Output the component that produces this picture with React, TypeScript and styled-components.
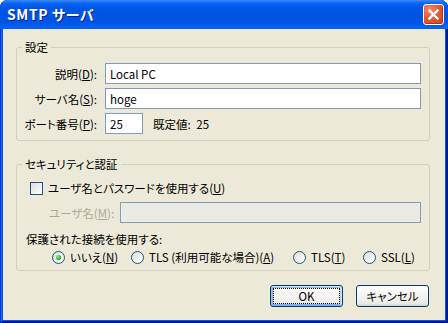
import React from "react";
import styled, { createGlobalStyle } from "styled-components";

const Global = createGlobalStyle`
  html, body { margin: 0; padding: 0; background: #ffffff; }
  body {
    font-family: "Noto Sans CJK JP", "Noto Sans", sans-serif;
    font-size: 11.5px;
    color: #000;
    font-feature-settings: "palt";
  }
  #root { width: 448px; height: 323px; }
`;

const Window = styled.div`
  width: 448px;
  height: 323px;
  display: flex;
  flex-direction: column;
  border-radius: 8px 8px 0 0;
  overflow: hidden;
  background: #0855dd;
  box-shadow: inset 1px 0 #0831d9, inset -1px 0 #00138c, inset 0 -1px #00138c,
    inset 2px 0 #166aee, inset -2px 0 #001ea0, inset 0 -2px #001ea0;
`;

const TitleBar = styled.div`
  height: 29px;
  flex: none;
  box-sizing: border-box;
  display: flex;
  align-items: center;
  justify-content: space-between;
  padding: 0 4px 1px 7px;
  background: linear-gradient(
    180deg,
    #3d8af5 0px,
    #1a72f8 2px,
    #0461f2 4px,
    #0056e6 8px,
    #0054e3 16px,
    #0055e6 22px,
    #005cf0 26px,
    #0a62f2 28px,
    #0858e6 29px
  );
`;

const Title = styled.span`
  color: #fff;
  font-weight: bold;
  font-size: 14px;
  letter-spacing: 0.6px;
  text-shadow: 1px 1px #0c1a8a;
  line-height: 16px;
`;

const CloseButton = styled.div`
  width: 21px;
  height: 21px;
  box-sizing: border-box;
  border: 1px solid #ffffff;
  border-radius: 3px;
  display: flex;
  align-items: center;
  justify-content: center;
  background: radial-gradient(circle at 30% 25%, #ef8a6c 0%, #e25b3a 45%, #c8431f 100%);
  box-shadow: inset -1px -1px #b2331a;
`;

const Body = styled.div`
  flex: 1;
  margin: 0 3px 3px;
  background: #ece9d8;
  padding: 18px 15px 0 13px;
  display: flex;
  flex-direction: column;
`;

const Group = styled.div<{ $gap?: number }>`
  border: 1px solid #d0d0bf;
  border-radius: 3px;
  padding: 0 8px 6px 0;
  margin-top: ${(p) => p.$gap ?? 0}px;
`;

const Legend = styled.div`
  margin: -8px 0 0 5px;
  padding: 0 3px;
  width: fit-content;
  height: 14px;
  line-height: 14px;
  background: #ece9d8;
`;

const FormGrid = styled.div`
  display: grid;
  grid-template-columns: 80px 1fr;
  column-gap: 8px;
  row-gap: 4px;
  margin-top: 9px;
  align-items: center;
`;

const FieldLabel = styled.label<{ $disabled?: boolean }>`
  text-align: right;
  white-space: nowrap;
  line-height: 14px;
  color: ${(p) => (p.$disabled ? "#aca899" : "#000")};
`;

const TextInput = styled.div<{ $disabled?: boolean; $width?: number }>`
  height: 21px;
  box-sizing: border-box;
  border: 1px solid #7f9db9;
  background: ${(p) => (p.$disabled ? "#ebebe4" : "#ffffff")};
  padding: 0 4px;
  display: flex;
  align-items: center;
  line-height: 14px;
  ${(p) => (p.$width ? `width: ${p.$width}px;` : "flex: 1;")}
`;

const PortRow = styled.div`
  display: flex;
  align-items: center;
`;

const DefaultNote = styled.span`
  margin-left: 10px;
  line-height: 14px;
  word-spacing: 3px;
`;

const CheckRow = styled.div`
  display: flex;
  align-items: center;
  gap: 5px;
  margin: 9px 0 0 13px;
  height: 16px;
  line-height: 14px;
`;

const CheckBox = styled.span`
  width: 13px;
  height: 13px;
  box-sizing: border-box;
  border: 1px solid #1c5180;
  background: linear-gradient(135deg, #dcdcd7, #ffffff);
  flex: none;
`;

const UserRow = styled.div`
  display: flex;
  align-items: center;
  margin: 6px 0 0 32px;
`;

const UserLabel = styled.span`
  width: 71px;
  flex: none;
  color: #aca899;
  line-height: 14px;
  white-space: nowrap;
`;

const PlainText = styled.div`
  margin: 9px 0 0 9px;
  line-height: 14px;
`;

const RadioGrid = styled.div`
  display: grid;
  grid-template-columns: 79px 162px 70px auto;
  margin: 4px 0 0 35px;
  height: 14px;
  align-items: center;
`;

const RadioItem = styled.div`
  display: flex;
  align-items: center;
  gap: 5px;
  white-space: nowrap;
  line-height: 14px;
`;

const RadioCircle = styled.span<{ $checked?: boolean }>`
  width: 13px;
  height: 13px;
  box-sizing: border-box;
  border-radius: 50%;
  border: 1px solid #1c5180;
  background: linear-gradient(135deg, #dcdcd7, #ffffff);
  flex: none;
  display: flex;
  align-items: center;
  justify-content: center;
  &::after {
    content: "";
    display: ${(p) => (p.$checked ? "block" : "none")};
    width: 5px;
    height: 5px;
    border-radius: 50%;
    background: radial-gradient(circle at 35% 35%, #8ff08f, #21a121 70%);
  }
`;

const ButtonRow = styled.div`
  display: flex;
  justify-content: flex-end;
  gap: 13px;
  margin: 14px 1px 0 0;
`;

const Button = styled.div<{ $default?: boolean }>`
  width: 73px;
  height: 22px;
  box-sizing: border-box;
  border: 1px solid #003c74;
  border-radius: 3px;
  background: linear-gradient(180deg, #ffffff, #ecebe6 86%, #d6d0c5);
  display: flex;
  align-items: center;
  justify-content: center;
  line-height: 14px;
  ${(p) =>
    p.$default
      ? `box-shadow: inset -1px 1px #cee7ff, inset 1px 2px #98b8ea, inset -2px 2px #bcd4f6, inset 1px -1px #89ade4, inset 2px -2px #89ade4;
         outline: 1px dotted #000; outline-offset: -4px;`
      : ""}
`;

export default function App() {
  return (
    <>
      <Global />
      <Window>
        <TitleBar>
          <Title>SMTP サーバ</Title>
          <CloseButton>
            <svg width="11" height="11" viewBox="0 0 11 11">
              <path d="M1.5 1.5 L9.5 9.5 M9.5 1.5 L1.5 9.5" stroke="#fff" strokeWidth="2.3" strokeLinecap="square" />
            </svg>
          </CloseButton>
        </TitleBar>
        <Body>
          <Group>
            <Legend>設定</Legend>
            <FormGrid>
              <FieldLabel>
                説明(<u>D</u>):
              </FieldLabel>
              <TextInput>Local PC</TextInput>
              <FieldLabel>
                サーバ名(<u>S</u>):
              </FieldLabel>
              <TextInput>hoge</TextInput>
              <FieldLabel>
                ポート番号(<u>P</u>):
              </FieldLabel>
              <PortRow>
                <TextInput $width={38}>25</TextInput>
                <DefaultNote>既定値: 25</DefaultNote>
              </PortRow>
            </FormGrid>
          </Group>
          <Group $gap={23}>
            <Legend>セキュリティと認証</Legend>
            <CheckRow>
              <CheckBox />
              <span>
                ユーザ名とパスワードを使用する(<u>U</u>)
              </span>
            </CheckRow>
            <UserRow>
              <UserLabel>
                ユーザ名(<u>M</u>):
              </UserLabel>
              <TextInput $disabled />
            </UserRow>
            <PlainText>保護された接続を使用する:</PlainText>
            <RadioGrid>
              <RadioItem>
                <RadioCircle $checked />
                <span>
                  いいえ(<u>N</u>)
                </span>
              </RadioItem>
              <RadioItem>
                <RadioCircle />
                <span>
                  TLS (利用可能な場合)(<u>A</u>)
                </span>
              </RadioItem>
              <RadioItem>
                <RadioCircle />
                <span>
                  TLS(<u>T</u>)
                </span>
              </RadioItem>
              <RadioItem>
                <RadioCircle />
                <span>
                  SSL(<u>L</u>)
                </span>
              </RadioItem>
            </RadioGrid>
          </Group>
          <ButtonRow>
            <Button $default>OK</Button>
            <Button>キャンセル</Button>
          </ButtonRow>
        </Body>
      </Window>
    </>
  );
}
